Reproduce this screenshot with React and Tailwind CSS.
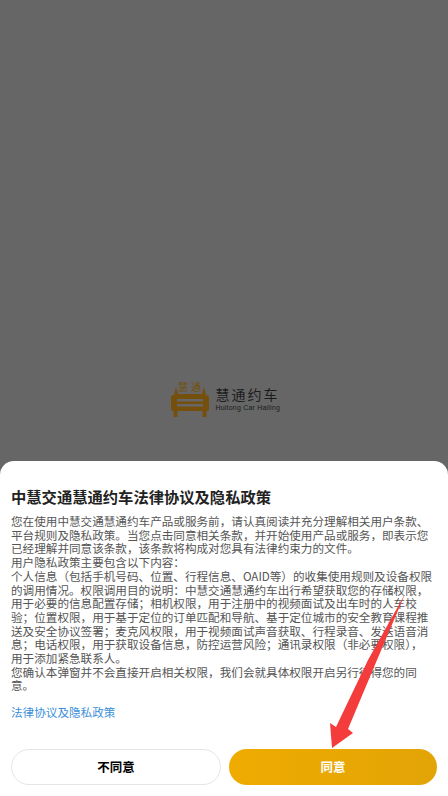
import React from 'react';

const cjk = { fontFamily: '"Noto Sans CJK SC", "Noto Sans", sans-serif' };

const bodyLines = [
  '您在使用中慧交通慧通约车产品或服务前，请认真阅读并充分理解相关用户条款、',
  '平台规则及隐私政策。当您点击同意相关条款，并开始使用产品或服务，即表示您',
  '已经理解并同意该条款，该条款将构成对您具有法律约束力的文件。',
  '用户隐私政策主要包含以下内容：',
  '个人信息（包括手机号码、位置、行程信息、OAID等）的收集使用规则及设备权限',
  '的调用情况。权限调用目的说明：中慧交通慧通约车出行希望获取您的存储权限，',
  '用于必要的信息配置存储；相机权限，用于注册中的视频面试及出车时的人车校',
  '验；位置权限，用于基于定位的订单匹配和导航、基于定位城市的安全教育课程推',
  '送及安全协议签署；麦克风权限，用于视频面试声音获取、行程录音、发送语音消',
  '息；电话权限，用于获取设备信息，防控运营风险；通讯录权限（非必要权限），',
  '用于添加紧急联系人。',
  '您确认本弹窗并不会直接开启相关权限，我们会就具体权限开启另行征得您的同',
  '意。',
];

const CarLogo = () => (
  <svg width="40" height="41" viewBox="0 -3 40 41" fill="#74500c">
    <path d="M1 16 Q1 14 4 14 L6 6 L8 13 L32 13 L34 6 L36 14 Q39 14 39 16 L39 28 Q39 30 37 30 L3 30 Q1 30 1 28 Z" />
    <rect x="3.5" y="30" width="4" height="6" />
    <rect x="32.5" y="30" width="4" height="6" />
    <rect x="7" y="18" width="26" height="2.5" fill="#666666" />
    <rect x="7" y="23" width="26" height="2.5" fill="#666666" />
    <text x="13" y="10" fontSize="10" fontFamily="'Noto Sans CJK SC', sans-serif" textAnchor="middle">慧</text>
    <text x="26" y="10" fontSize="10" fontFamily="'Noto Sans CJK SC', sans-serif" textAnchor="middle">通</text>
  </svg>
);

const Arrow = () => (
  <svg className="absolute left-[325px] top-[590px] pointer-events-none" width="85" height="162" viewBox="325 590 85 162">
    <polygon points="405,594 377,660 348,729 353,733 332,748 330,723 336,727 368,660" fill="#f43c3c" />
  </svg>
);

export default function App() {
  return (
    <div className="relative h-[796px] w-[448px] overflow-hidden bg-[#666666]" style={cjk}>
      {/* Splash behind the dialog */}
      <div className="flex h-full items-center justify-center">
        <div className="flex items-center gap-[6px]">
          <CarLogo />
          <div className="flex w-[63px] flex-col items-start">
            <span className="text-[14px] leading-[18px] tracking-[2px] whitespace-nowrap text-[#1c1c1c]">慧通约车</span>
            <span className="text-[7px] leading-[9px] tracking-[0.2px] whitespace-nowrap text-[#1c1c1c]" style={{ fontFamily: '"Liberation Sans", sans-serif' }}>Huitong Car Hailing</span>
          </div>
        </div>
      </div>

      {/* Dialog */}
      <div className="absolute inset-x-0 bottom-0 flex h-[335px] flex-col rounded-t-[14px] bg-white px-[11px]">
        <h1 className="mt-[25px] text-[15.3px] leading-[20px] font-bold text-[#222222]">中慧交通慧通约车法律协议及隐私政策</h1>
        <div className="mt-[9px] text-[11.6px] leading-[13.7px] whitespace-nowrap text-[#555555]">
          {bodyLines.map((line, i) => (
            <p key={i}>{line}</p>
          ))}
        </div>
        <a className="mt-[11px] text-[11.6px] leading-[16px] text-[#3b8fd9]">法律协议及隐私政策</a>
        <div className="mt-[29px] flex gap-2">
          <button className="h-9 flex-1 rounded-full border border-[#e5e5e5] bg-white text-[12.5px] font-bold text-black">不同意</button>
          <button className="h-9 flex-1 rounded-full bg-gradient-to-r from-[#efab00] to-[#e2a406] text-[12.5px] font-bold text-white">同意</button>
        </div>
      </div>

      <Arrow />
    </div>
  );
}
